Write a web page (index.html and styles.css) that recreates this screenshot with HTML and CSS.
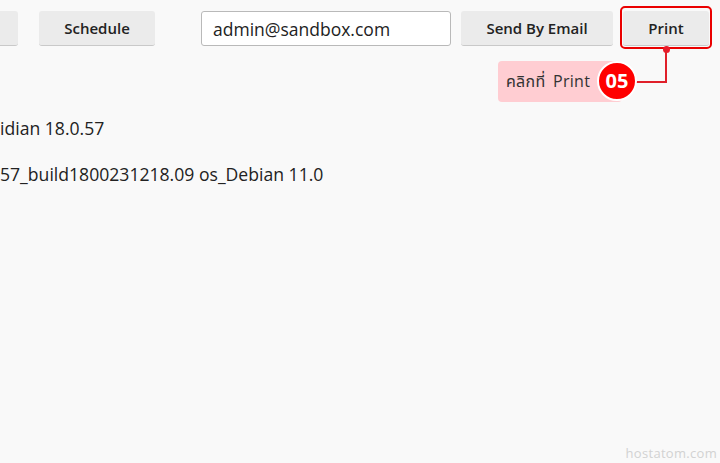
FILE: index.html
```html
<!DOCTYPE html>
<html>
<head>
<meta charset="utf-8">
<link rel="stylesheet" href="styles.css">
</head>
<body>
<div class="page">
  <div class="toolbar">
    <button class="btn btn-cut" aria-label="Back"></button>
    <button class="btn btn-schedule">Schedule</button>
    <input class="email" type="text" value="admin@sandbox.com">
    <button class="btn btn-send">Send By Email</button>
    <div class="print-wrap">
      <button class="btn btn-print">Print</button>
      <span class="highlight"></span>
      <span class="dot"></span>
      <span class="line-v"></span>
      <span class="line-h"></span>
      <div class="callout">
        <span class="callout-text">คลิกที่ Print</span>
        <span class="step">05</span>
      </div>
    </div>
  </div>
  <div class="content">
    <p class="line">idian 18.0.57</p>
    <p class="line">57_build1800231218.09 os_Debian 11.0</p>
  </div>
  <div class="watermark">hostatom.com</div>
</div>
</body>
</html>
```
FILE: styles.css
```css
* { box-sizing: border-box; }
html, body { margin: 0; padding: 0; }
body {
  background: #f9f9f9;
  font-family: "Open Sans", "Noto Sans", "Noto Sans Thai", "DejaVu Sans", sans-serif;
  color: #222;
  width: 720px;
  height: 463px;
  overflow: hidden;
}
.page { position: relative; width: 720px; height: 463px; }
.toolbar {
  display: flex;
  align-items: center;
  padding-top: 11px;
  margin-left: -80px;
}
.btn {
  height: 35px;
  background: #ebebeb;
  border: none;
  border-bottom: 1px solid #c9c9c9;
  border-radius: 3px;
  font-family: "Open Sans", sans-serif;
  font-weight: 600;
  font-size: 15px;
  color: #222;
  padding: 0;
}
.btn-cut { width: 98px; }
.btn-schedule { width: 116px; margin-left: 21px; }
.email {
  margin-left: 46px;
  width: 250px;
  height: 35px;
  border: 1px solid #b9b9b9;
  border-radius: 3px;
  background: #fff;
  font-family: "Open Sans", sans-serif;
  font-size: 17.5px;
  color: #222;
  padding: 0 0 0 11px;
}
.btn-send { width: 152px; margin-left: 10px; }
.print-wrap { position: relative; margin-left: 10px; }
.btn-print { width: 86px; display: block; }
.highlight {
  position: absolute;
  left: -3px; right: -3px; top: -5px; bottom: -3px;
  border: 2px solid #ea0000;
  border-radius: 5px;
}
.dot {
  position: absolute;
  left: 40px; top: 35px;
  width: 7px; height: 7px;
  border-radius: 50%;
  background: #ea1a2a;
}
.line-v {
  position: absolute;
  left: 42px; top: 38px;
  width: 2px; height: 34px;
  background: #e0202a;
}
.line-h {
  position: absolute;
  left: 10px; top: 70px;
  width: 34px; height: 2px;
  background: #e0202a;
}
.callout {
  position: absolute;
  left: -125px; top: 50px;
  width: 140px; height: 41px;
}
.callout-text {
  position: absolute;
  left: 0; top: 0;
  width: 124px; height: 41px;
  background: #ffcdd2;
  border-radius: 4px;
  font-size: 16px;
  color: #333;
  padding-left: 8px;
  line-height: 41px;
  font-weight: 400;
  word-spacing: 3px;
  letter-spacing: 0.3px;
}
.step {
  position: absolute;
  left: 99px; top: 0;
  width: 40px; height: 40px;
  border-radius: 50%;
  background: #f00;
  border: 2px solid #fff;
  color: #fff;
  font-weight: 700;
  font-size: 20px;
  line-height: 36px;
  text-align: center;
}
.content { padding-top: 70px; }
.line {
  margin: 0 0 22px 0;
  font-size: 17.6px;
  line-height: 24px;
  color: #222;
}
.watermark {
  position: absolute;
  right: 3px; bottom: 1px;
  font-size: 13px;
  color: #d2d2d2;
  letter-spacing: 0.3px;
}
```
